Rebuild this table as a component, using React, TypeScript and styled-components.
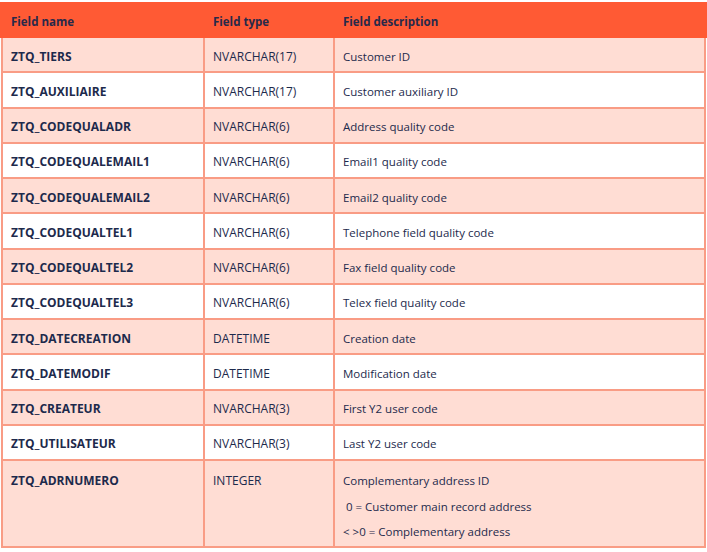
import React from "react";
import styled, { createGlobalStyle } from "styled-components";

const Global = createGlobalStyle`
  html, body { margin: 0; padding: 0; background: #ffffff; }
  body { font-family: "Open Sans", "Noto Sans", sans-serif; color: #1d2a4c; }
`;

const Page = styled.div`
  padding-top: 2px;
  width: 707px;
`;

const HeaderRow = styled.div`
  display: grid;
  grid-template-columns: 204px 130px 373px;
  height: 36px;
  background: #ff5a34;
  align-items: center;
`;

const HeadCell = styled.div`
  padding-left: 11px;
  padding-top: 3px;
  font-weight: 700;
  font-size: 11.5px;
  color: #27294a;
  &:not(:first-child) { padding-left: 9px; }
`;

const Body = styled.div`
  margin-left: 1px;
  width: 705px;
  border-left: 2px solid #f99c85;
  box-sizing: border-box;
`;

const Row = styled.div<{ $alt: boolean; $tall?: boolean }>`
  display: grid;
  grid-template-columns: 202px 130px 371px;
  height: ${(p) => (p.$tall ? "87px" : "35.25px")};
  box-sizing: border-box;
  border-bottom: 2px solid #f99c85;
  background: ${(p) => (p.$alt ? "#ffddd4" : "#ffffff")};
`;

const Cell = styled.div<{ $top?: boolean; $kind: "name" | "type" | "desc" }>`
  border-right: 2px solid #f99c85;
  box-sizing: border-box;
  padding-left: 8px;
  display: flex;
  flex-direction: column;
  justify-content: ${(p) => (p.$top ? "flex-start" : "center")};
  padding-top: ${(p) => (p.$top ? "12px" : "3px")};
  font-size: ${(p) => (p.$kind === "desc" ? "11.5px" : "12px")};
  font-weight: ${(p) => (p.$kind === "name" ? 700 : 400)};
  color: #1d2a4c;
  white-space: nowrap;
`;

const Line = styled.div`
  height: 25.5px;
  line-height: 15px;
`;

const rows: [string, string, string][] = [
  ["ZTQ_TIERS", "NVARCHAR(17)", "Customer ID"],
  ["ZTQ_AUXILIAIRE", "NVARCHAR(17)", "Customer auxiliary ID"],
  ["ZTQ_CODEQUALADR", "NVARCHAR(6)", "Address quality code"],
  ["ZTQ_CODEQUALEMAIL1", "NVARCHAR(6)", "Email1 quality code"],
  ["ZTQ_CODEQUALEMAIL2", "NVARCHAR(6)", "Email2 quality code"],
  ["ZTQ_CODEQUALTEL1", "NVARCHAR(6)", "Telephone field quality code"],
  ["ZTQ_CODEQUALTEL2", "NVARCHAR(6)", "Fax field quality code"],
  ["ZTQ_CODEQUALTEL3", "NVARCHAR(6)", "Telex field quality code"],
  ["ZTQ_DATECREATION", "DATETIME", "Creation date"],
  ["ZTQ_DATEMODIF", "DATETIME", "Modification date"],
  ["ZTQ_CREATEUR", "NVARCHAR(3)", "First Y2 user code"],
  ["ZTQ_UTILISATEUR", "NVARCHAR(3)", "Last Y2 user code"],
];

export default function App() {
  return (
    <Page>
      <Global />
      <HeaderRow>
        <HeadCell>Field name</HeadCell>
        <HeadCell>Field type</HeadCell>
        <HeadCell>Field description</HeadCell>
      </HeaderRow>
      <Body>
        {rows.map((r, i) => (
          <Row key={r[0]} $alt={i % 2 === 0}>
            <Cell $kind="name">{r[0]}</Cell>
            <Cell $kind="type">{r[1]}</Cell>
            <Cell $kind="desc">{r[2]}</Cell>
          </Row>
        ))}
        <Row $alt $tall>
          <Cell $kind="name" $top>
            <Line>ZTQ_ADRNUMERO</Line>
          </Cell>
          <Cell $kind="type" $top>
            <Line>INTEGER</Line>
          </Cell>
          <Cell $kind="desc" $top>
            <Line>Complementary address ID</Line>
            <Line>&nbsp;0 = Customer main record address</Line>
            <Line>&lt; &gt;0 = Complementary address</Line>
          </Cell>
        </Row>
      </Body>
    </Page>
  );
}
